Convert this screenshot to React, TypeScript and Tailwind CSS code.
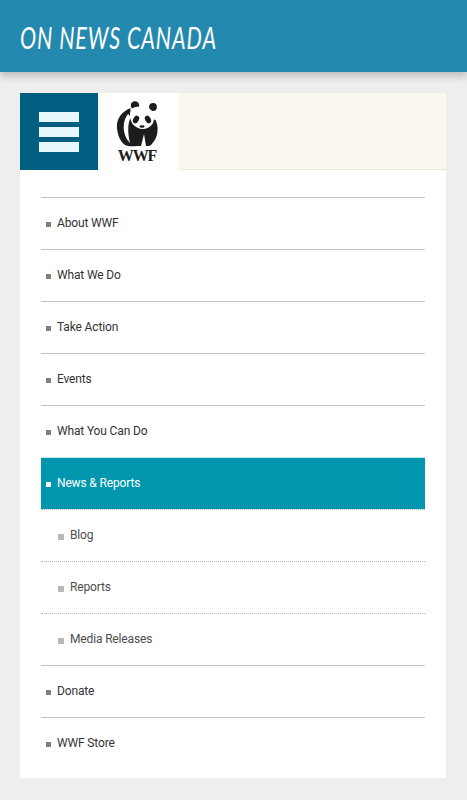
import React from "react";

interface IMenuItem {
  label: string;
  active?: boolean;
  sub?: boolean;
}

const menuItems: IMenuItem[] = [
  { label: "About WWF" },
  { label: "What We Do" },
  { label: "Take Action" },
  { label: "Events" },
  { label: "What You Can Do" },
  { label: "News & Reports", active: true },
  { label: "Blog", sub: true },
  { label: "Reports", sub: true },
  { label: "Media Releases", sub: true },
  { label: "Donate" },
  { label: "WWF Store" },
];

const WwfLogo = () => (
  <div className="flex flex-col items-center">
    <svg width="42" height="46" viewBox="0 0 42 46" className="block">
      <path
        d="M15 7C6 10 0 18 1 27c.6 7 3 13 8 17 3 1.500 7 1.500 12 1h4l3-12 2 12c2 .2 4-.2 5-1 5-5 7-11 6.500-18-.2-3-1-5-2-7L14 9z"
        fill="#1c1c1c"
      />
      <circle cx="19" cy="4.500" r="4.200" fill="#1c1c1c" />
      <circle cx="37" cy="6" r="3.900" fill="#1c1c1c" />
      <path
        d="M15 8C21 4 32 5 36 10c3 4 2.500 9 .5 13-3 4-7 5.500-11 5-4-.5-8-3-10-7-2-4-2-9-.5-13z"
        fill="#ffffff"
      />
      <path
        d="M12 13C7 19 7 28 9 34c1 3 3 6 5 8-2-9-3-19 1-26z"
        fill="#ffffff"
      />
      <ellipse cx="20" cy="18.500" rx="2.800" ry="4" fill="#1c1c1c" transform="rotate(28 20 18.500)" />
      <ellipse cx="32" cy="18.500" rx="2.800" ry="4" fill="#1c1c1c" transform="rotate(-28 32 18.500)" />
      <ellipse cx="26" cy="25.500" rx="2.600" ry="1.300" fill="#1c1c1c" />
    </svg>
    <span className="mt-[2px] text-[16px] leading-[13px] font-bold tracking-[-1.1px] text-[#1c1c1c] font-['Liberation_Serif',serif]">
      WWF
    </span>
  </div>
);

const App = () => {
  return (
    <div className="min-h-[800px] bg-[#eeeeee] font-['Roboto',sans-serif]">
      <header className="flex h-[72px] items-center bg-[#2389ae] pl-5 shadow-[0_4px_8px_rgba(0,0,0,0.22)]">
        <h1 className="origin-left scale-x-[0.8] scale-y-[1.15] text-[27px] leading-none font-normal tracking-[1.100px] whitespace-nowrap text-white italic font-['Lato',sans-serif]">
          ON NEWS CANADA
        </h1>
      </header>

      <div className="ml-5 w-[426px] pt-[21px]">
        <div className="flex h-[77px] bg-[#f9f7ee]">
          <button
            type="button"
            className="flex w-[78px] flex-col items-center justify-center gap-[5px] bg-[#005f80]"
          >
            <span className="block h-[10px] w-[40px] bg-[#e8f7fb]" />
            <span className="block h-[10px] w-[40px] bg-[#e8f7fb]" />
            <span className="block h-[10px] w-[40px] bg-[#e8f7fb]" />
          </button>
          <div className="flex w-[78px] items-center justify-center bg-white">
            <WwfLogo />
          </div>
          <div className="w-[5px] bg-gradient-to-r from-white to-[#f9f7ee]" />
        </div>

        <nav className="bg-white px-[21px] pt-[27px] pb-[9px] shadow-[0_-1px_1px_rgba(0,0,0,0.06)]">
          <ul>
            {menuItems.map((item) => (
              <li
                key={item.label}
                className={
                  item.active
                    ? "flex h-[52px] items-center border-t border-[#c8e6ec] bg-[#0097ae] pl-[5px] text-white"
                    : item.sub
                      ? "flex h-[52px] items-center border-t border-dotted border-[#b5b5b5] pl-[17px] text-[#4d4d4d]"
                      : "flex h-[52px] items-center border-t border-[#c4c4c4] pl-[5px] text-[#333333]"
                }
              >
                <span
                  className={
                    item.active
                      ? "mt-[2px] mr-[6px] block h-[5px] w-[5px] bg-white"
                      : item.sub
                        ? "mt-[2px] mr-[6px] block h-[6px] w-[6px] bg-[#b8b8b8]"
                        : "mt-[2px] mr-[6px] block h-[5px] w-[5px] bg-[#808080]"
                  }
                />
                <span className="-mt-[2px] text-[12px] leading-none tracking-[-0.15px]">
                  {item.label}
                </span>
              </li>
            ))}
          </ul>
        </nav>
      </div>
    </div>
  );
};

export default App;
